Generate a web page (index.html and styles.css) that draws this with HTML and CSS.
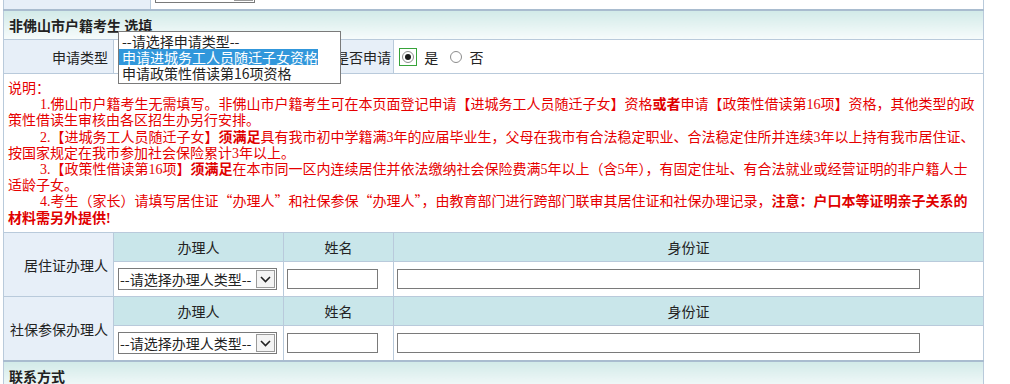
FILE: index.html
```html
<!DOCTYPE html>
<html>
<head>
    <title>非佛山市户籍考生选填</title>
    <meta charset="UTF-8">
    <link rel="stylesheet" href="styles.css">
</head>
<body>
    <div class="page">
        <table class="form-table top-table">
            <colgroup>
                <col style="width: 147px">
                <col>
            </colgroup>
            <tr>
                <td class="label"></td>
                <td class="field">
                    <span class="combo combo-top">
                        <select class="combo-select"><option></option></select>
                        <span class="combo-btn"><svg width="11" height="7" viewBox="0 0 11 7"><polyline points="1,1 5.5,5.5 10,1" fill="none" stroke="#222" stroke-width="1.6"/></svg></span>
                    </span>
                </td>
            </tr>
        </table>

        <table class="form-table main-table">
            <colgroup>
                <col style="width: 110px">
                <col style="width: 170px">
                <col style="width: 47px">
                <col style="width: 63px">
                <col>
            </colgroup>
            <tr class="section-row">
                <td class="section" colspan="5">非佛山市户籍考生 选填</td>
            </tr>
            <tr class="apply-row">
                <td class="label">申请类型</td>
                <td class="field apply-cell" colspan="2">
                    <span class="combo combo-apply">
                        <select class="combo-select"><option>--请选择申请类型--</option></select>
                        <span class="combo-btn"></span>
                    </span>
                    <ul class="dropdown">
                        <li>--请选择申请类型--</li>
                        <li class="active">申请进城务工人员随迁子女资格</li>
                        <li>申请政策性借读第16项资格</li>
                    </ul>
                </td>
                <td class="label">是否申请</td>
                <td class="field">
                    <span class="focus-ring"><input type="radio" name="apply" class="radio" checked></span>
                    <span class="radio-text">是</span>
                    <input type="radio" name="apply" class="radio">
                    <span class="radio-text">否</span>
                </td>
            </tr>
            <tr>
                <td class="note" colspan="5">
                    <div>说明：</div>
                    <div class="note-item">1.佛山市户籍考生无需填写。非佛山市户籍考生可在本页面登记申请【进城务工人员随迁子女】资格<b>或者</b>申请【政策性借读第16项】资格，其他类型的政策性借读生审核由各区招生办另行安排。</div>
                    <div class="note-item">2.【进城务工人员随迁子女】<b>须满足</b>具有我市初中学籍满3年的应届毕业生，父母在我市有合法稳定职业、合法稳定住所并连续3年以上持有我市居住证、按国家规定在我市参加社会保险累计3年以上。</div>
                    <div class="note-item">3.【政策性借读第16项】<b>须满足</b>在本市同一区内连续居住并依法缴纳社会保险费满5年以上（含5年），有固定住址、有合法就业或经营证明的非户籍人士适龄子女。</div>
                    <div class="note-item">4.考生（家长）请填写居住证<span class="cjk">“办理人”</span>和社保参保<span class="cjk">“办理人”</span>，由教育部门进行跨部门联审其居住证和社保办理记录，<b>注意：户口本等证明亲子关系的材料需另外提供!</b></div>
                </td>
            </tr>
            <tr class="head-row">
                <td class="label" rowspan="2">居住证办理人</td>
                <th>办理人</th>
                <th colspan="2">姓名</th>
                <th>身份证</th>
            </tr>
            <tr class="input-row">
                <td class="field">
                    <span class="combo combo-agent">
                        <select class="combo-select"><option>--请选择办理人类型--</option></select>
                        <span class="combo-btn"><svg width="11" height="7" viewBox="0 0 11 7"><polyline points="1,1 5.5,5.5 10,1" fill="none" stroke="#222" stroke-width="1.6"/></svg></span>
                    </span>
                </td>
                <td class="field" colspan="2"><input type="text" class="text-input name-input"></td>
                <td class="field"><input type="text" class="text-input id-input"></td>
            </tr>
            <tr class="head-row">
                <td class="label" rowspan="2">社保参保办理人</td>
                <th>办理人</th>
                <th colspan="2">姓名</th>
                <th>身份证</th>
            </tr>
            <tr class="input-row">
                <td class="field">
                    <span class="combo combo-agent">
                        <select class="combo-select"><option>--请选择办理人类型--</option></select>
                        <span class="combo-btn"><svg width="11" height="7" viewBox="0 0 11 7"><polyline points="1,1 5.5,5.5 10,1" fill="none" stroke="#222" stroke-width="1.6"/></svg></span>
                    </span>
                </td>
                <td class="field" colspan="2"><input type="text" class="text-input name-input"></td>
                <td class="field"><input type="text" class="text-input id-input"></td>
            </tr>
            <tr class="section-row">
                <td class="section" colspan="5">联系方式</td>
            </tr>
        </table>
    </div>
</body>
</html>
```

FILE: styles.css
```css
body {
    margin: 0;
    font-family: "Noto Sans CJK SC", sans-serif;
    font-size: 14px;
    color: #222;
    background-color: #fff;
}
.page {
    width: 981px;
    margin: -26px 0 0 3px;
}
.form-table {
    width: 100%;
    border-collapse: collapse;
    table-layout: fixed;
}
.form-table td,
.form-table th {
    border: 1px solid #b9cadb;
    padding: 0 4px;
    line-height: 16px;
}
.top-table td {
    height: 34px;
    border-bottom: none;
}
.label {
    background-color: #e7eff8;
    text-align: right;
    white-space: nowrap;
}
.form-table .label {
    padding-right: 5px;
}
.field {
    background-color: #fff;
}
.section {
    height: 28px;
    border-top: 2px solid #a9bccf !important;
    background: linear-gradient(#d2eae8, #f6fbfb);
    font-weight: bold;
    font-size: 14px;
}
.form-table .section {
    padding-left: 5px;
}
.apply-row td {
    height: 33px;
}
.apply-cell {
    position: relative;
}
.radio {
    appearance: none;
    width: 12px;
    height: 12px;
    margin: 0;
    border: 1px solid #8c8c8c;
    border-radius: 50%;
    background: #fff;
    vertical-align: middle;
    display: inline-flex;
    align-items: center;
    justify-content: center;
}
.radio:checked::after {
    content: "";
    width: 6px;
    height: 6px;
    border-radius: 50%;
    background-color: #1a1a1a;
}
.focus-ring {
    display: inline-flex;
    padding: 2px;
    border: 1px solid #37a33a;
    vertical-align: middle;
    margin-left: 1px;
}
.radio-text {
    margin: 0 9px 0 4px;
    vertical-align: middle;
}
.form-table .note {
    height: 146px;
    padding: 7px 4px 5px;
    color: #e60000;
    font-family: "Liberation Serif", "Noto Sans CJK SC", serif;
    line-height: 16.2px;
    vertical-align: top;
}
.note b {
    color: #e00000;
}
.note .cjk {
    font-family: "Noto Sans CJK SC", sans-serif;
    line-height: 0;
}
.note-item {
    text-indent: 32px;
}
.form-table th {
    height: 28px;
    background-color: #c9e6ea;
    font-weight: normal;
}
.input-row td {
    height: 34px;
}
.combo {
    display: inline-flex;
    align-items: stretch;
    height: 22px;
    box-sizing: border-box;
    border: 1px solid #7a7a7a;
    background-color: #fff;
    vertical-align: middle;
}
.combo-select {
    appearance: none;
    border: none;
    outline: none;
    background: transparent;
    font-family: inherit;
    font-size: 14px;
    color: #222;
    padding: 0 0 0 1px;
    flex: 1;
    min-width: 0;
}
.combo-btn {
    width: 17px;
    margin: 1px;
    border: 1px solid #9a9a9a;
    background-color: #f4f4f4;
    display: flex;
    align-items: center;
    justify-content: center;
}
.combo-top {
    width: 100px;
}
.combo-apply {
    width: 210px;
}
.combo-agent {
    width: 159px;
}
.text-input {
    height: 20px;
    box-sizing: border-box;
    border: 1px solid #7a7a7a;
    margin: 0 0 0 -1px;
    vertical-align: middle;
}
.name-input {
    width: 91px;
}
.id-input {
    width: 523px;
}
.dropdown {
    position: absolute;
    left: 4px;
    top: -9px;
    width: 223px;
    box-sizing: border-box;
    margin: 0;
    padding: 1px 0 2px;
    list-style: none;
    border: 1px solid #7a7a7a;
    background-color: #fff;
    z-index: 2;
}
.dropdown li {
    height: 16px;
    line-height: 16px;
    padding-left: 3px;
    white-space: nowrap;
}
.dropdown li.active {
    width: 196px;
    background-color: #3197db;
    color: #fff;
}
```
